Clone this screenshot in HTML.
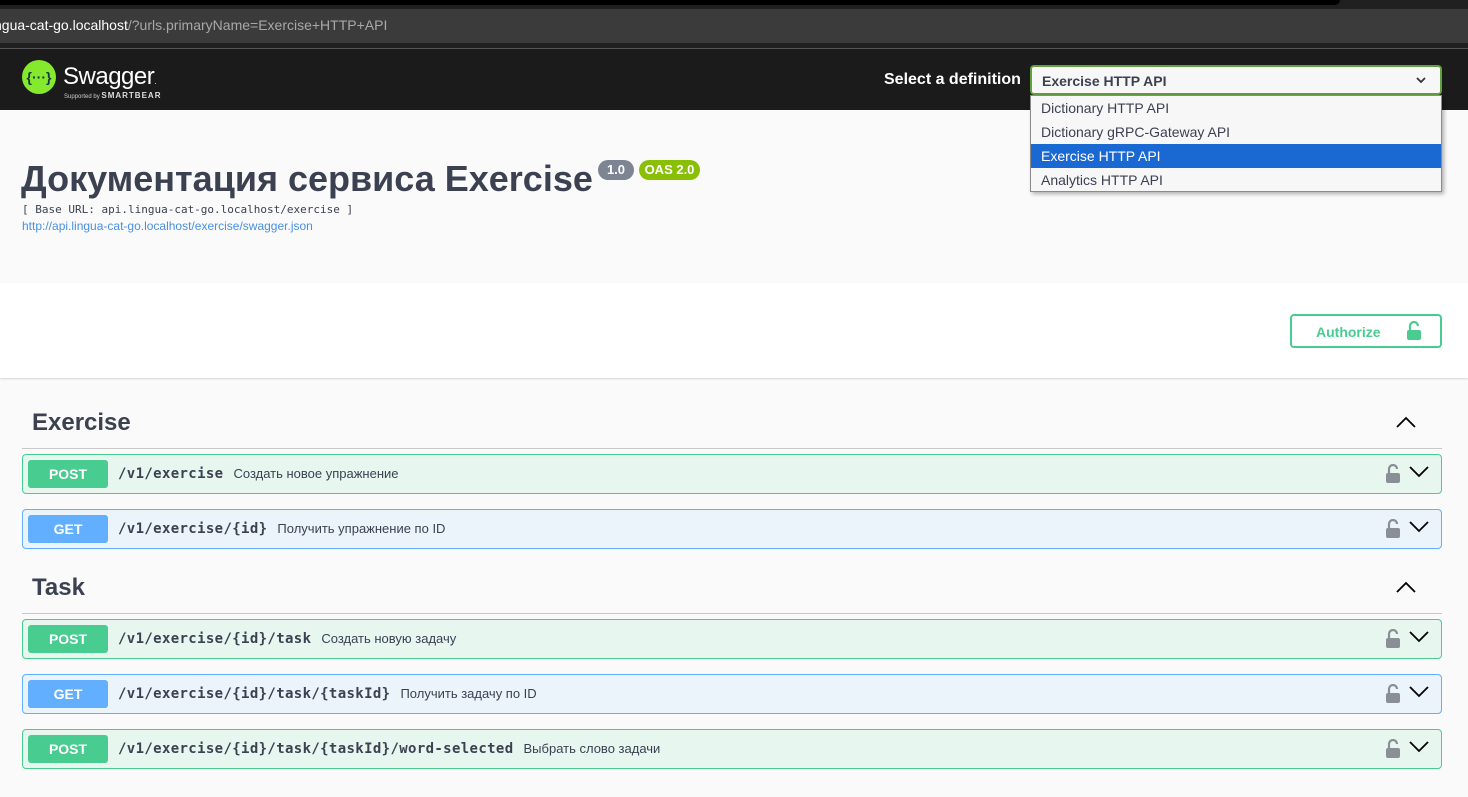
<!DOCTYPE html>
<html><head><meta charset="utf-8"><style>
*{box-sizing:border-box;margin:0;padding:0}
body{width:1468px;height:797px;overflow:hidden;background:#fafafa;font-family:"Liberation Sans",sans-serif;position:relative}
.abs{position:absolute}
.op{position:absolute;left:22px;width:1420px;height:40px;border-radius:4px;border:1px solid}
.post{background:#e8f6f0;border-color:#49cc90}
.get{background:#ebf3fb;border-color:#61affe}
.badge{position:absolute;left:5px;top:5px;width:80px;height:28px;border-radius:3px;color:#fff;font-weight:bold;font-size:14px;text-align:center;line-height:28px}
.post .badge{background:#49cc90}.get .badge{background:#61affe}
.path{position:absolute;left:95px;top:11px;font-family:"DejaVu Sans Mono","Liberation Mono",monospace;font-weight:bold;font-size:14px;letter-spacing:0.36px;color:#3b4151;white-space:nowrap}
.path span{font-family:"Liberation Sans",sans-serif;font-weight:normal;font-size:13px;letter-spacing:0;margin-left:10px}
.lk{position:absolute;right:40px;top:9px}
.ch{position:absolute;right:12px;top:11px}
.sec{position:absolute;left:32px;font-size:24px;font-weight:bold;color:#3b4151}
.hr{position:absolute;left:22px;width:1420px;height:1px;background:#c8c8c8}
</style></head><body>
<div class="abs" style="left:0;top:0;width:1468px;height:49px;background:#202020"></div>
<div class="abs" style="left:0;top:0;width:1340px;height:5px;background:#000;border-radius:0 0 8px 0"></div>
<div class="abs" style="left:0;top:9px;width:1468px;height:34px;background:#3b3b3b"></div>
<div class="abs" style="left:0;top:17px;font-size:14px;color:#fff;white-space:nowrap;margin-left:-6px">ngua-cat-go.localhost<span style="color:#a8a8a8">/?urls.primaryName=Exercise+HTTP+API</span></div>
<div class="abs" style="left:0;top:48px;width:1468px;height:1px;background:#555"></div>
<div class="abs" style="left:0;top:49px;width:1468px;height:61px;background:#1b1b1b"></div>
<svg class="abs" style="left:22px;top:60px" width="34" height="34" viewBox="0 0 34 34"><circle cx="17" cy="17" r="17" fill="#85ea2d"/><text x="17" y="22" text-anchor="middle" font-family="Liberation Sans" font-size="14" font-weight="bold" fill="#173647">{···}</text></svg>
<div class="abs" style="left:63px;top:63px;color:#fff;font-size:24px;letter-spacing:-0.5px">Swagger<span style="font-size:8px">.</span></div>
<div class="abs" style="left:64px;top:91px;color:#ccc;font-size:6px;white-space:nowrap">Supported by <b style="font-size:8px;letter-spacing:1px;color:#ddd">SMARTBEAR</b></div>
<div class="abs" style="left:884px;top:71px;color:#fff;font-size:16px;font-weight:bold">Select a definition</div>
<div class="abs" style="left:1030px;top:65px;width:412px;height:30px;border:2px solid #62a03f;border-radius:4px;background:#f7f7f7;font-size:14px;font-weight:bold;color:#3b4151;padding:6px 10px">Exercise HTTP API
<svg style="position:absolute;right:14px;top:10px" width="10" height="7" viewBox="0 0 10 7"><path d="M1 1l4 4 4-4" stroke="#333" stroke-width="1.8" fill="none"/></svg></div>
<div class="abs" style="left:0;top:110px;width:1468px;height:173px;background:#fafafa"></div>
<div class="abs" style="left:0;top:283px;width:1468px;height:95px;background:#fff;box-shadow:0 1px 2px rgba(0,0,0,.15)"></div>
<div class="abs" style="left:21px;top:158px;font-size:36px;font-weight:bold;color:#3b4151;white-space:nowrap">Документация сервиса Exercise</div>
<div class="abs" style="left:598px;top:160px;width:36px;height:20px;border-radius:10px;background:#7d8492;color:#fff;font-size:13px;font-weight:bold;text-align:center;line-height:20px">1.0</div>
<div class="abs" style="left:639px;top:160px;width:61px;height:20px;border-radius:10px;background:#89bf04;color:#fff;font-size:13px;font-weight:bold;text-align:center;line-height:20px">OAS 2.0</div>
<div class="abs" style="left:22px;top:203px;font-family:'DejaVu Sans Mono',monospace;font-size:11px;color:#3b4151;white-space:nowrap">[ Base URL: api.lingua-cat-go.localhost/exercise ]</div>
<div class="abs" style="left:22px;top:219px;font-size:12px;color:#4990e2">http://api.lingua-cat-go.localhost/exercise/swagger.json</div>
<div class="abs" style="left:1290px;top:314px;width:152px;height:34px;border:2px solid #49cc90;border-radius:4px;color:#49cc90;font-weight:bold;font-size:14px;padding:8px 0 0 24px">Authorize
<svg style="position:absolute;left:114px;top:5px" width="16" height="20" viewBox="0 0 16 20"><path d="M4 9V5a4 4 0 0 1 8 0" stroke="#49cc90" stroke-width="2.2" fill="none"/><rect x="1" y="9" width="14" height="10" rx="2" fill="#49cc90"/></svg></div>
<div class="sec" style="top:409px">Exercise</div>
<svg class="abs" style="left:1396px;top:416px" width="20" height="12"><path d="M1 11l9-9 9 9" stroke="#000" stroke-width="1.8" fill="none"/></svg>
<div class="hr" style="top:448px"></div>
<div class="sec" style="top:574px">Task</div>
<svg class="abs" style="left:1396px;top:581px" width="20" height="12"><path d="M1 11l9-9 9 9" stroke="#000" stroke-width="1.8" fill="none"/></svg>
<div class="hr" style="top:613px"></div>

<div class="op post" style="top:454px"><div class="badge">POST</div><div class="path">/v1/exercise<span>Создать новое упражнение</span></div>LOCK</div>
<div class="op get" style="top:509px"><div class="badge">GET</div><div class="path">/v1/exercise/{id}<span>Получить упражнение по ID</span></div>LOCK</div>
<div class="op post" style="top:619px"><div class="badge">POST</div><div class="path">/v1/exercise/{id}/task<span>Создать новую задачу</span></div>LOCK</div>
<div class="op get" style="top:674px"><div class="badge">GET</div><div class="path">/v1/exercise/{id}/task/{taskId}<span>Получить задачу по ID</span></div>LOCK</div>
<div class="op post" style="top:729px"><div class="badge">POST</div><div class="path">/v1/exercise/{id}/task/{taskId}/word-selected<span>Выбрать слово задачи</span></div>LOCK</div>

<div class="abs" style="left:1030px;top:95px;width:412px;height:97px;background:#f7f7f7;border:1px solid #8a8a8a;box-shadow:2px 2px 4px rgba(0,0,0,.3);font-size:14px;color:#3b4151">
<div style="height:24px;padding:4px 10px">Dictionary HTTP API</div>
<div style="height:24px;padding:4px 10px">Dictionary gRPC-Gateway API</div>
<div style="height:24px;padding:4px 10px;background:#1a69d3;color:#fff">Exercise HTTP API</div>
<div style="height:24px;padding:4px 10px">Analytics HTTP API</div>
</div>
<script>
document.querySelectorAll('.op').forEach(o=>{o.innerHTML=o.innerHTML.replace('LOCK','<svg class="lk" width="16" height="20" viewBox="0 0 16 20"><path d="M4 9V5a4 4 0 0 1 8 0" stroke="#8a8f95" stroke-width="2.2" fill="none"/><rect x="1" y="9" width="14" height="10" rx="2" fill="#8a8f95"/></svg><svg class="ch" width="20" height="12"><path d="M1 1l9 9 9-9" stroke="#000" stroke-width="1.8" fill="none"/></svg>')});
</script>
</body></html>
